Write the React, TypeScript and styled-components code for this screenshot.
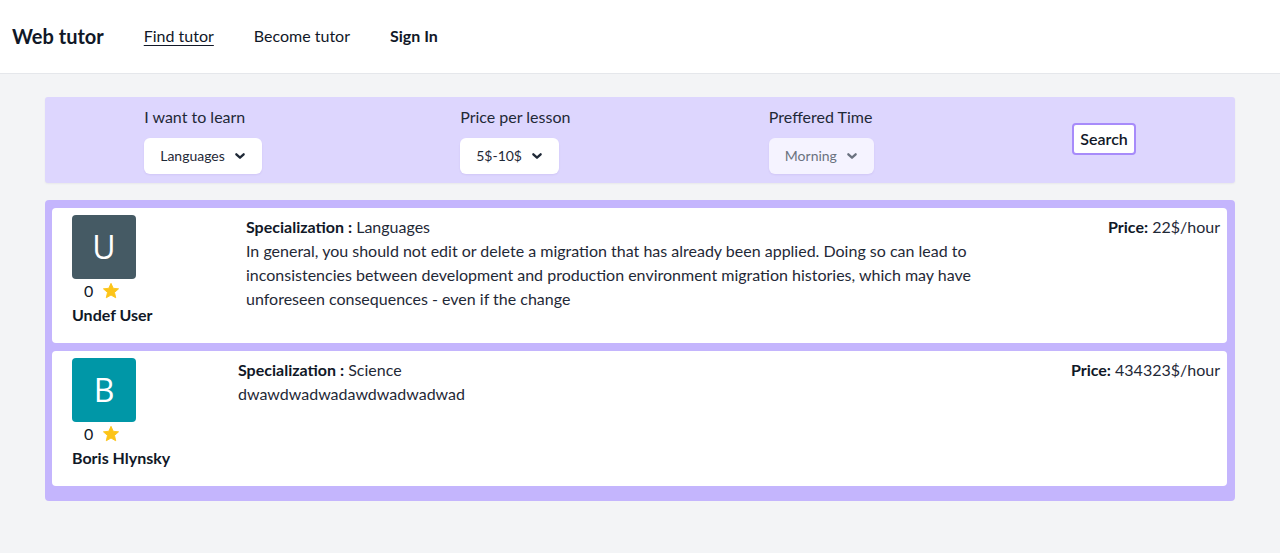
import React from 'react';
import styled, { createGlobalStyle } from 'styled-components';

interface Tutor {
  initial: string;
  name: string;
  color: string;
  rating: number;
  specialization: string;
  about: string;
  price: string;
  asideWidth: number;
}

const tutors: Tutor[] = [
  {
    initial: 'U',
    name: 'Undef User',
    color: '#455a64',
    rating: 0,
    specialization: 'Languages',
    about:
      'In general, you should not edit or delete a migration that has already been applied. Doing so can lead to inconsistencies between development and production environment migration histories, which may have unforeseen consequences - even if the change',
    price: '22$/hour',
    asideWidth: 174,
  },
  {
    initial: 'B',
    name: 'Boris Hlynsky',
    color: '#0097a7',
    rating: 0,
    specialization: 'Science',
    about: 'dwawdwadwadawdwadwadwad',
    price: '434323$/hour',
    asideWidth: 166,
  },
];

const GlobalStyle = createGlobalStyle`
  * { box-sizing: border-box; }
  body {
    margin: 0;
    background: #f3f4f6;
    font-family: Lato, "Open Sans", sans-serif;
    color: #1f2937;
  }
`;

const Header = styled.header`
  height: 74px;
  background: #fff;
  border-bottom: 1px solid #e5e7eb;
  display: flex;
  align-items: center;
  gap: 40px;
  padding: 0 12px 2px;
`;

const Logo = styled.div`
  font-size: 20px;
  font-weight: 700;
  color: #111827;
`;

const NavLink = styled.a<{ $active?: boolean; $strong?: boolean }>`
  font-size: 16px;
  color: #111827;
  text-decoration: ${(p) => (p.$active ? 'underline' : 'none')};
  text-underline-offset: 3px;
  font-weight: ${(p) => (p.$strong ? 700 : 400)};
  cursor: pointer;
`;

const Main = styled.main`
  margin: 23px 45px 0 45px;
  display: flex;
  flex-direction: column;
  gap: 17px;
`;

const FilterBar = styled.div`
  background: #ddd6fe;
  border-radius: 3px;
  height: 86px;
  display: flex;
  align-items: center;
  justify-content: space-around;
  box-shadow: 0 1px 2px rgba(0, 0, 0, 0.05);
`;

const Field = styled.div`
  display: flex;
  flex-direction: column;
  gap: 9px;
  margin-top: -2px;
`;

const Label = styled.span`
  font-size: 16px;
  line-height: 24px;
  color: #1f2937;
`;

const Select = styled.div<{ $muted?: boolean }>`
  height: 36px;
  display: inline-flex;
  align-items: center;
  gap: 7px;
  padding: 0 14px 0 16px;
  align-self: flex-start;
  border-radius: 6px;
  font-size: 14px;
  background: ${(p) => (p.$muted ? '#f5f3ff' : '#fff')};
  color: ${(p) => (p.$muted ? '#6b7280' : '#1f2937')};
  box-shadow: 0 1px 2px rgba(76, 29, 149, 0.08);
`;

const SearchButton = styled.button`
  height: 32px;
  padding: 0 6px;
  margin-top: -3px;
  background: #fff;
  border: 2px solid #a78bfa;
  border-radius: 4px;
  font-family: inherit;
  font-size: 16px;
  font-weight: 600;
  color: #111827;
`;

const List = styled.div`
  background: #c4b5fd;
  border-radius: 4px;
  padding: 8px 8px 15px 7px;
  display: flex;
  flex-direction: column;
  gap: 8px;
`;

const Card = styled.div`
  background: #fff;
  border-radius: 4px;
  padding: 7px 7px 16px 20px;
  display: flex;
  align-items: flex-start;
  font-size: 16px;
  line-height: 24px;
`;

const Aside = styled.div<{ $width: number }>`
  width: ${(p) => p.$width}px;
  flex-shrink: 0;
  display: flex;
  flex-direction: column;
`;

const Avatar = styled.div<{ $color: string }>`
  width: 64px;
  height: 64px;
  border-radius: 4px;
  background: ${(p) => p.$color};
  color: #fff;
  font-family: "Open Sans", sans-serif;
  font-size: 32px;
  font-weight: 400;
  display: flex;
  align-items: center;
  justify-content: center;
`;

const Rating = styled.div`
  display: flex;
  align-items: center;
  gap: 9px;
  padding-left: 12px;
  color: #111827;
`;

const Name = styled.div`
  font-weight: 700;
  color: #111827;
`;

const Body = styled.div`
  flex: 1;
  max-width: 790px;
  color: #1f2937;
`;

const Bold = styled.b`
  font-weight: 700;
  color: #111827;
`;

const Price = styled.div`
  margin-left: auto;
  white-space: nowrap;
`;

const Chevron = () => (
  <svg width="16" height="16" viewBox="0 0 24 24" fill="none" stroke="currentColor" strokeWidth="3.5" strokeLinecap="round" strokeLinejoin="round">
    <path d="M6.5 9.5l5.5 5 5.5-5" />
  </svg>
);

const Star = () => (
  <svg width="18" height="18" viewBox="0 0 24 24">
    <path
      fill="#fcc419"
      stroke="#fcc419"
      strokeWidth="1.2"
      strokeLinejoin="round"
      d="M12 1.8l3 6.6 7.1.7-5.4 4.8 1.6 7.1L12 17.4l-6.3 3.6 1.6-7.1-5.4-4.8 7.1-.7z"
    />
  </svg>
);

const TutorCard = ({ tutor }: { tutor: Tutor }) => (
  <Card>
    <Aside $width={tutor.asideWidth}>
      <Avatar $color={tutor.color}>{tutor.initial}</Avatar>
      <Rating>
        {tutor.rating}
        <Star />
      </Rating>
      <Name>{tutor.name}</Name>
    </Aside>
    <Body>
      <div>
        <Bold>Specialization :</Bold> {tutor.specialization}
      </div>
      <div>{tutor.about}</div>
    </Body>
    <Price>
      <Bold>Price:</Bold> {tutor.price}
    </Price>
  </Card>
);

export default function App() {
  return (
    <>
      <GlobalStyle />
      <Header>
        <Logo>Web tutor</Logo>
        <NavLink $active>Find tutor</NavLink>
        <NavLink>Become tutor</NavLink>
        <NavLink $strong>Sign In</NavLink>
      </Header>
      <Main>
        <FilterBar>
          <Field>
            <Label>I want to learn</Label>
            <Select>
              Languages
              <Chevron />
            </Select>
          </Field>
          <Field>
            <Label>Price per lesson</Label>
            <Select>
              5$-10$
              <Chevron />
            </Select>
          </Field>
          <Field>
            <Label>Preffered Time</Label>
            <Select $muted>
              Morning
              <Chevron />
            </Select>
          </Field>
          <SearchButton>Search</SearchButton>
        </FilterBar>
        <List>
          {tutors.map((t) => (
            <TutorCard key={t.name} tutor={t} />
          ))}
        </List>
      </Main>
    </>
  );
}
